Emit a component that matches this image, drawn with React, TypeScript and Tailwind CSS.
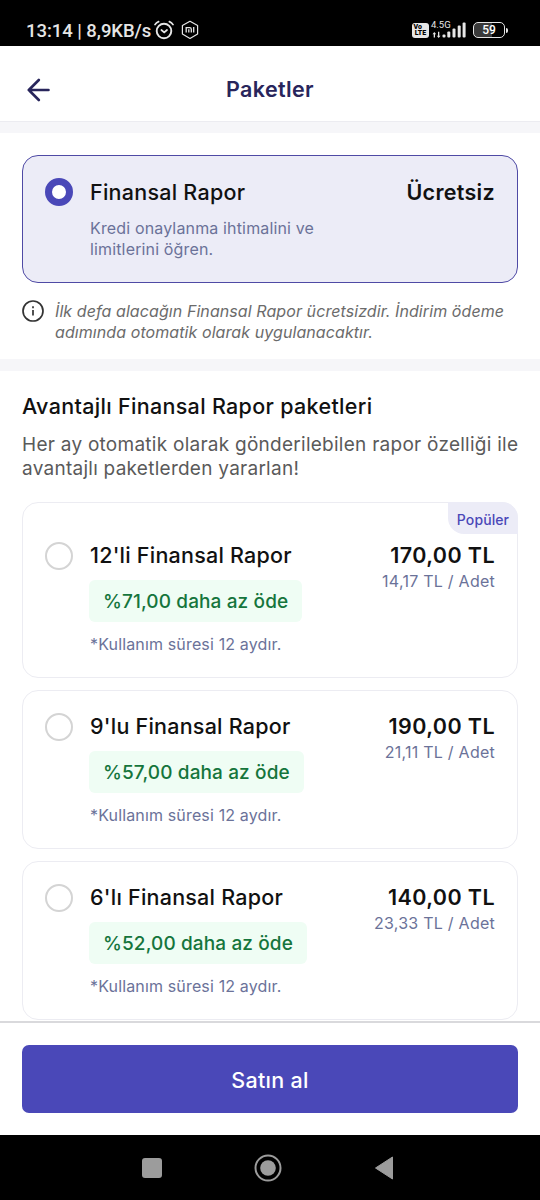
const packages = [
  {
    title: "12'li Finansal Rapor",
    price: "170,00 TL",
    unit: "14,17 TL / Adet",
    discount: "%71,00 daha az öde",
    popular: true,
  },
  {
    title: "9'lu Finansal Rapor",
    price: "190,00 TL",
    unit: "21,11 TL / Adet",
    discount: "%57,00 daha az öde",
    popular: false,
  },
  {
    title: "6'lı Finansal Rapor",
    price: "140,00 TL",
    unit: "23,33 TL / Adet",
    discount: "%52,00 daha az öde",
    popular: false,
  },
];

function StatusBar() {
  return (
    <div className="flex h-[46px] shrink-0 items-start justify-between bg-black pt-[18px] pr-[32px] pl-[26px] font-[Roboto,sans-serif] text-[#e6e6e6]">
      <div className="flex h-6 items-center">
        <span className="w-[125px] pt-[2px] text-[18.5px] leading-6 font-medium tracking-[-0.05px] whitespace-nowrap">
          13:14 | 8,9KB/s
        </span>
        <svg width="20" height="20" viewBox="0 0 20 20" fill="none" stroke="currentColor" strokeLinecap="round" className="ml-[3px]">
          <circle cx="10" cy="11" r="7.3" strokeWidth="1.9" />
          <path d="M7.4 10l2.8 2.4 2.8-2.4" strokeWidth="1.7" />
          <path d="M1 4.6Q2.2 2.6 4.6 1.6M19 4.6Q17.8 2.6 15.4 1.6" strokeWidth="1.7" />
        </svg>
        <svg width="18" height="20" viewBox="0 0 18 20" fill="none" stroke="currentColor" className="ml-[7px]">
          <path d="M9 1.3l7.6 4.2v8.6L9 18.4l-7.6-4.3V5.5z" strokeWidth="1.2" strokeLinejoin="round" />
          <path d="M5.2 12.4V7.6H8.7Q10.3 7.6 10.3 9.2V12.4M7.8 9.3V12.4M12.7 7V12.4" strokeWidth="1.3" />
        </svg>
      </div>
      <div className="flex h-6 items-center">
        <div className="flex h-[15px] w-[17px] flex-col items-center justify-center rounded-[3px] bg-[#e6e6e6] text-[7px] leading-[6.5px] font-black text-black">
          <span className="w-[14px]">Vo</span>
          <span>LTE</span>
        </div>
        <div className="relative ml-[3px] h-5 w-[36px]">
          <span className="absolute -top-px -left-px text-[9.5px] leading-[11px]">4.5G</span>
          <svg width="36" height="20" viewBox="0 0 36 20" fill="currentColor" className="absolute inset-0">
            <path d="M2.3 12l1.9 2.3H3v3.2H1.7v-3.2H.5zM6.7 18l-1.9-2.3H6v-3.9h1.3v3.9h1.2z" />
            <rect x="10.5" y="14.5" width="3" height="3" rx="1" />
            <rect x="15.3" y="11.5" width="3" height="6" rx="1" />
            <rect x="20.5" y="8.5" width="3" height="9" rx="1" />
            <rect x="25.7" y="5.5" width="3" height="12" rx="1" />
            <rect x="30.6" y="2.5" width="3" height="15" rx="1" />
          </svg>
        </div>
        <div className="ml-[5px] flex h-[16px] w-[32px] items-center justify-center rounded-[5px] border-[1.5px] border-[#e6e6e6] bg-linear-to-r from-[#3a3a3a] from-60% to-black to-60% text-[12px] leading-none font-medium text-white">
          59
        </div>
        <div className="ml-[1px] h-[5px] w-[2px] rounded-r bg-[#e6e6e6]" />
      </div>
    </div>
  );
}

function Header() {
  return (
    <header className="grid h-[76px] shrink-0 grid-cols-[1fr_auto_1fr] items-center border-b border-[#ececf1] px-[27px] pt-[11px]">
      <svg width="24" height="24" viewBox="0 0 24 24" fill="none" stroke="#28255b" strokeWidth="2.6" strokeLinecap="round" strokeLinejoin="round" className="mt-[2px]">
        <path d="M21.5 12H1.8M11.8 2L1.8 12l10 10" />
      </svg>
      <h1 className="text-[21.5px] font-semibold tracking-[0.35px] text-[#28255b]">Paketler</h1>
    </header>
  );
}

function PackageCard({ item }: { item: (typeof packages)[number] }) {
  return (
    <div
      className={`relative flex shrink-0 rounded-[16px] border border-[#ececf2] px-[22px] ${
        item.popular ? "h-[176px] pt-[36px]" : "h-[159px] pt-[19px]"
      }`}
    >
      {item.popular && (
        <span className="absolute -top-px -right-px flex h-8 w-[70px] items-center justify-center rounded-tr-[16px] rounded-bl-[16px] bg-[#ececf7] pt-[3px] text-[14px] font-medium tracking-[0.1px] text-[#4a48b8]">
          Popüler
        </span>
      )}
      <span className="mt-[3px] size-7 shrink-0 rounded-full border-2 border-[#d4d4d4]" />
      <div className="ml-4 flex flex-1 flex-col items-start">
        <h3 className="pl-px text-[21.5px] leading-8 font-medium tracking-[0.23px] text-[#111]">{item.title}</h3>
        <span className="mt-[9px] flex h-[42px] items-center rounded-[6px] bg-[#effdf4] px-[14px] pt-[2px] text-[19px] font-medium tracking-[0.12px] whitespace-nowrap text-[#15753c]">
          {item.discount}
        </span>
        <span className="mt-[10px] pl-px text-[16px] leading-6 tracking-[0.15px] text-[#6b7299]">
          *Kullanım süresi 12 aydır.
        </span>
      </div>
      <div className="text-right">
        <p className="text-[21.5px] leading-8 font-semibold tracking-[0.4px] text-[#111]">{item.price}</p>
        <p className="text-[16px] leading-5 tracking-[0.25px] text-[#6b7299]">{item.unit}</p>
      </div>
    </div>
  );
}

function NavBar() {
  return (
    <div className="flex h-[65px] shrink-0 items-center bg-black pl-[142px] text-[#9c9c9c]">
      <span className="size-5 rounded-[3px] bg-current" />
      <svg width="28" height="28" viewBox="0 0 28 28" className="ml-[92px]">
        <circle cx="14" cy="14" r="12.5" fill="none" stroke="currentColor" strokeWidth="2" />
        <circle cx="14" cy="14" r="7.8" fill="currentColor" />
      </svg>
      <svg width="20" height="24" viewBox="0 0 20 24" fill="currentColor" stroke="currentColor" strokeLinejoin="round" className="ml-[92px]">
        <path d="M1.5 12L18.5 1v22z" />
      </svg>
    </div>
  );
}

export default function App() {
  return (
    <div className="flex h-[1200px] w-[540px] flex-col overflow-hidden bg-white font-[Inter,sans-serif]">
      <StatusBar />
      <Header />
      <div className="h-[11px] shrink-0 bg-[#f6f6f9]" />

      <section className="h-[226px] shrink-0 px-[22px] pt-[22px]">
        <div className="flex h-[128px] rounded-[16px] border-[1.5px] border-[#4f4aa5] bg-[#ececf7] px-[22px] pt-[20px]">
          <span className="mt-[2px] size-7 shrink-0 rounded-full border-[7px] border-[#4a48b8] bg-white" />
          <div className="ml-[17px] flex-1">
            <h2 className="text-[21.5px] leading-8 font-medium tracking-[0.25px] text-[#111]">Finansal Rapor</h2>
            <p className="mt-[10px] text-[16px] leading-[21px] tracking-[0.15px] text-[#6b7299]">
              Kredi onaylanma ihtimalini ve
              <br />
              limitlerini öğren.
            </p>
          </div>
          <span className="text-[21.5px] leading-8 font-semibold tracking-[0.3px] text-[#111]">Ücretsiz</span>
        </div>
        <div className="mt-[17px] flex">
          <svg width="22" height="22" viewBox="0 0 22 22" fill="none" stroke="#333" strokeWidth="1.7">
            <circle cx="11" cy="11" r="10" />
            <path d="M11 10v5.5M11 6.2v2" />
          </svg>
          <p className="mt-px ml-[11px] text-[16px] leading-[21px] tracking-[0.08px] whitespace-nowrap text-[#6b6b6b] italic">
            İlk defa alacağın Finansal Rapor ücretsizdir. İndirim ödeme
            <br />
            adımında otomatik olarak uygulanacaktır.
          </p>
        </div>
      </section>

      <div className="h-3 shrink-0 bg-[#f6f6f9]" />

      <section className="flex min-h-0 flex-1 flex-col px-[22px] pt-[19px]">
        <h2 className="text-[21.5px] leading-8 font-medium tracking-[0.32px] text-[#111]">
          Avantajlı Finansal Rapor paketleri
        </h2>
        <p className="mt-[11px] text-[19px] leading-6 tracking-[0.26px] whitespace-nowrap text-[#5a5a5a]">
          Her ay otomatik olarak gönderilebilen rapor özelliği ile
          <br />
          avantajlı paketlerden yararlan!
        </p>
        <div className="mt-[21px] flex flex-col gap-3">
          {packages.map((item) => (
            <PackageCard key={item.title} item={item} />
          ))}
        </div>
      </section>

      <footer className="h-[114px] shrink-0 border-t-2 border-[#d9d9dc] px-[22px] pt-[22px]">
        <button className="h-[68px] w-full rounded-[7px] bg-[#4a48b8] pt-[2px] text-[21.5px] font-medium tracking-[0.3px] text-white">
          Satın al
        </button>
      </footer>
      <NavBar />
    </div>
  );
}
